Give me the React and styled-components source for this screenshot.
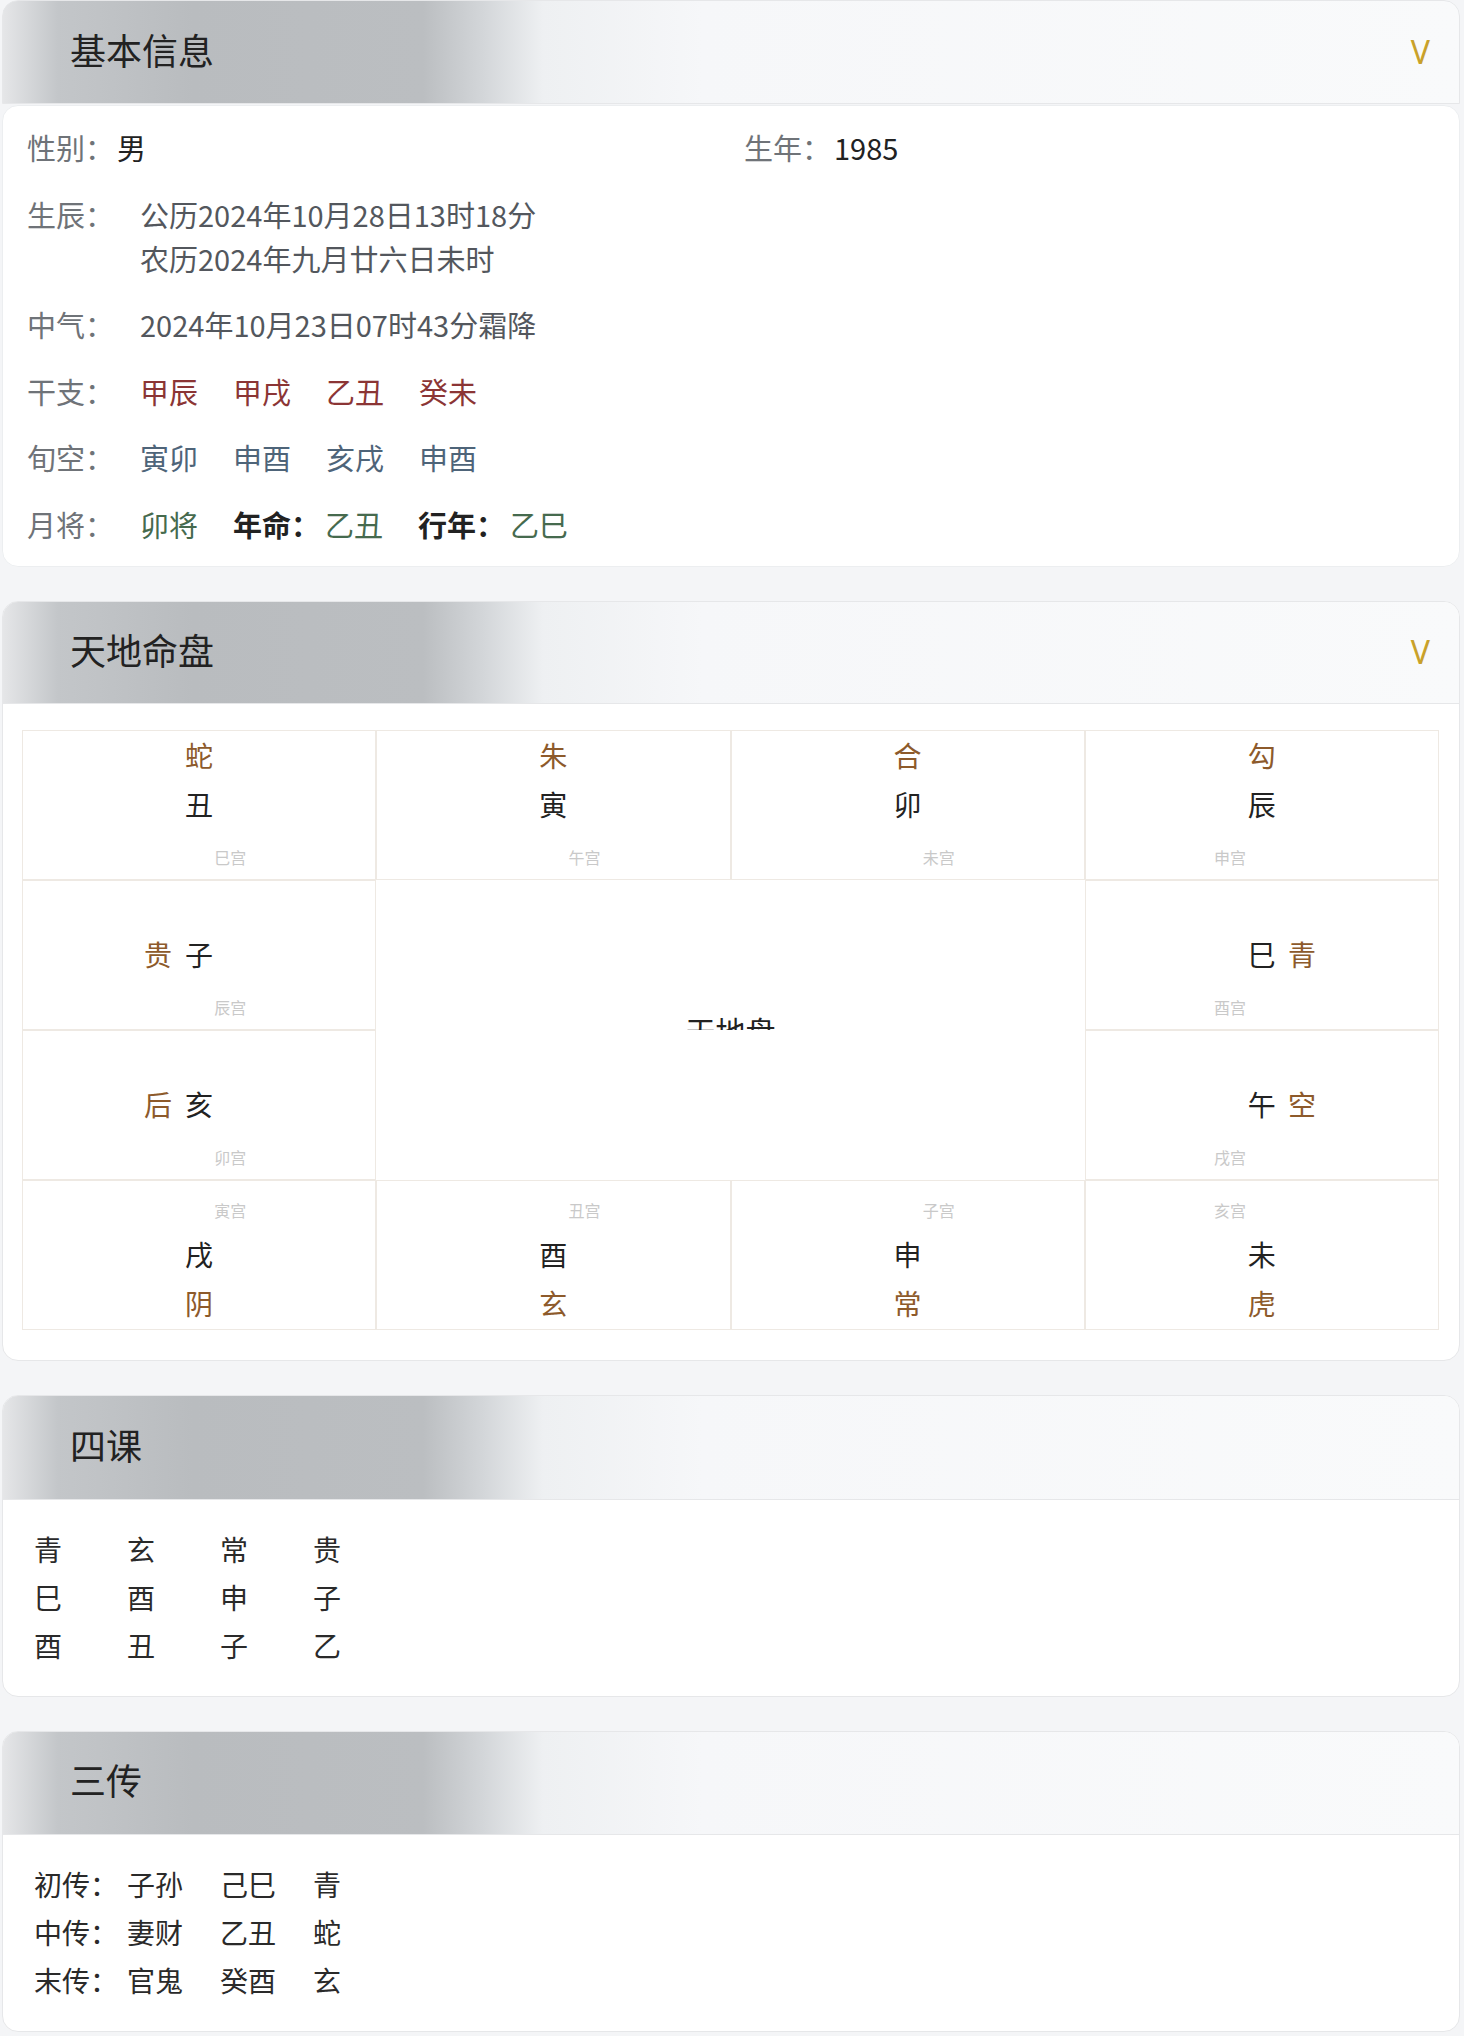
import React from 'react';
import styled, { createGlobalStyle } from 'styled-components';

const GlobalStyle = createGlobalStyle`
    html, body {
        margin: 0;
        padding: 0;
        background: #f4f5f7;
    }
    body {
        font-family: "Noto Sans CJK SC", "Noto Sans", sans-serif;
        color: #222;
    }
`;

const Page = styled.div`
    display: flex;
    flex-direction: column;
    gap: 34px;
    padding: 0 4px 0 2px;
`;

const Card = styled.section`
    background: ${p => (p.$split ? 'transparent' : '#fff')};
    border: ${p => (p.$split ? 'none' : '1.5px solid #e6e7e9')};
    border-radius: 16px;
    overflow: hidden;
`;

const Header = styled.header`
    box-sizing: border-box;
    height: ${p => p.$h}px;
    display: flex;
    align-items: center;
    justify-content: space-between;
    padding: 0 29px 7px 67px;
    background: linear-gradient(90deg, #e5e6e8 0px, #c3c6c9 55px, #b9bcbf 190px, #bbbec1 420px,
        #d3d6d9 480px, #eef0f2 540px, #f6f7f9 700px, #f9fafb 100%);
    border-bottom: 1.5px solid #e6e7e9;
    ${p => p.$split && `
        border: 1.5px solid #e6e7e9;
        border-radius: 16px 16px 0 0;
    `}
`;

const Title = styled.h2`
    margin: 0;
    font-size: 36px;
    font-weight: 400;
    line-height: 1;
    color: #222;
`;

const Chevron = styled.span`
    font-family: "Noto Sans", "Liberation Sans", sans-serif;
    font-size: 32px;
    line-height: 1;
    color: #c9a12a;
    margin-top: 6px;
`;

const InfoBody = styled.div`
    margin-top: 1px;
    background: #fff;
    border: 1.5px solid #eceef0;
    border-radius: 16px;
    padding: 19px 24px 20px;
    display: flex;
    flex-direction: column;
    gap: 22.6px;
`;

const PairRow = styled.div`
    display: grid;
    grid-template-columns: 717px 1fr;
    font-size: 29px;
    line-height: 44px;
`;

const InfoRow = styled.div`
    display: flex;
    font-size: 29px;
    line-height: 44px;
`;

const Label = styled.span`
    flex-shrink: 0;
    width: ${p => p.$w || 'auto'};
    margin-right: ${p => p.$gap || 0};
    color: #6f7378;
`;

const Value = styled.span`
    color: ${p => p.$color || '#222'};
    font-weight: ${p => (p.$bold ? 700 : 400)};
`;

const Lines = styled.div`
    display: flex;
    flex-direction: column;
    color: #53575d;
`;

const Items = styled.div`
    display: flex;
    gap: 35px;
`;

const Tag = styled.span`
    display: flex;
    gap: 5px;
`;

const BoardBody = styled.div`
    padding: 26px 20px 30px 19px;
`;

const Board = styled.div`
    display: grid;
    grid-template-columns: repeat(4, 1fr);
    grid-template-rows: repeat(4, 150px);
`;

const Cell = styled.div`
    position: relative;
    grid-column: ${p => p.$c};
    grid-row: ${p => p.$r};
    border: 1.5px solid #eee9e3;
    background: #fff;
    display: flex;
    flex-direction: column;
    align-items: center;
    justify-content: ${p => (p.$side ? 'center' : 'flex-start')};
    padding-top: ${p => (p.$pos === 'bottom' ? '49px' : '0')};
    font-size: 28px;
    line-height: 49px;
`;

const General = styled.span`
    color: #8d5a2b;
`;

const Branch = styled.span`
    position: relative;
    color: #222;
`;

const SideGeneral = styled.span`
    position: absolute;
    top: 0;
    color: #8d5a2b;
    ${p => (p.$right ? 'left: calc(100% + 12px);' : 'right: calc(100% + 13px);')}
`;

const Palace = styled.span`
    position: absolute;
    font-size: 16px;
    line-height: 16px;
    color: #c9c9c9;
    left: ${p => (p.$shift ? 'calc(50% - 48px)' : 'calc(50% + 15px)')};
    ${p => (p.$top ? 'top: 21px;' : 'bottom: 14px;')}
`;

const Center = styled.div`
    grid-column: 2 / 4;
    grid-row: 2;
    overflow: hidden;
    display: flex;
    align-items: flex-end;
    justify-content: center;
`;

const CenterText = styled.span`
    font-size: 30px;
    line-height: 30px;
    color: #222;
    transform: translateY(50%);
`;

const ListBody = styled.div`
    padding: 25px 31px 27px;
`;

const Table = styled.div`
    display: grid;
    grid-template-columns: repeat(4, 93px);
    font-size: 28px;
    line-height: 48px;
    color: #2a2a2a;
`;

const board = [
    { r: 1, c: 1, pos: 'top', g: '蛇', b: '丑', p: '巳宫' },
    { r: 1, c: 2, pos: 'top', g: '朱', b: '寅', p: '午宫' },
    { r: 1, c: 3, pos: 'top', g: '合', b: '卯', p: '未宫' },
    { r: 1, c: 4, pos: 'top', g: '勾', b: '辰', p: '申宫' },
    { r: 2, c: 1, pos: 'left', g: '贵', b: '子', p: '辰宫' },
    { r: 2, c: 4, pos: 'right', g: '青', b: '巳', p: '酉宫' },
    { r: 3, c: 1, pos: 'left', g: '后', b: '亥', p: '卯宫' },
    { r: 3, c: 4, pos: 'right', g: '空', b: '午', p: '戌宫' },
    { r: 4, c: 1, pos: 'bottom', g: '阴', b: '戌', p: '寅宫' },
    { r: 4, c: 2, pos: 'bottom', g: '玄', b: '酉', p: '丑宫' },
    { r: 4, c: 3, pos: 'bottom', g: '常', b: '申', p: '子宫' },
    { r: 4, c: 4, pos: 'bottom', g: '虎', b: '未', p: '亥宫' },
];

const siKe = [
    ['青', '玄', '常', '贵'],
    ['巳', '酉', '申', '子'],
    ['酉', '丑', '子', '乙'],
];

const sanChuan = [
    ['初传：', '子孙', '己巳', '青'],
    ['中传：', '妻财', '乙丑', '蛇'],
    ['末传：', '官鬼', '癸酉', '玄'],
];

const RED = '#8b3535';
const SLATE = '#4e6479';
const GREEN = '#466a4e';

const BoardCell = ({ cell }) => {
    const side = cell.pos === 'left' || cell.pos === 'right';
    return (
        <Cell $r={cell.r} $c={cell.c} $pos={cell.pos} $side={side}>
            {cell.pos === 'top' && <General>{cell.g}</General>}
            <Branch>
                {cell.b}
                {side && <SideGeneral $right={cell.pos === 'right'}>{cell.g}</SideGeneral>}
            </Branch>
            {cell.pos === 'bottom' && <General>{cell.g}</General>}
            <Palace $shift={cell.c === 4} $top={cell.pos === 'bottom'}>{cell.p}</Palace>
        </Cell>
    );
};

const App = () => {
    return (
        <Page>
            <GlobalStyle />

            <Card $split>
                <Header $h={104} $split>
                    <Title>基本信息</Title>
                    <Chevron>V</Chevron>
                </Header>
                <InfoBody>
                    <PairRow>
                        <InfoRow>
                            <Label $gap="3px">性别：</Label>
                            <Value>男</Value>
                        </InfoRow>
                        <InfoRow>
                            <Label $gap="3px">生年：</Label>
                            <Value>1985</Value>
                        </InfoRow>
                    </PairRow>
                    <InfoRow>
                        <Label $w="113px">生辰：</Label>
                        <Lines>
                            <span>公历2024年10月28日13时18分</span>
                            <span>农历2024年九月廿六日未时</span>
                        </Lines>
                    </InfoRow>
                    <InfoRow>
                        <Label $w="113px">中气：</Label>
                        <Lines>
                            <span>2024年10月23日07时43分霜降</span>
                        </Lines>
                    </InfoRow>
                    <InfoRow>
                        <Label $w="113px">干支：</Label>
                        <Items>
                            {['甲辰', '甲戌', '乙丑', '癸未'].map(v => (
                                <Value key={v} $color={RED}>{v}</Value>
                            ))}
                        </Items>
                    </InfoRow>
                    <InfoRow>
                        <Label $w="113px">旬空：</Label>
                        <Items>
                            {['寅卯', '申酉', '亥戌', '申酉'].map((v, i) => (
                                <Value key={i} $color={SLATE}>{v}</Value>
                            ))}
                        </Items>
                    </InfoRow>
                    <InfoRow>
                        <Label $w="113px">月将：</Label>
                        <Items>
                            <Value $color={GREEN}>卯将</Value>
                            <Tag>
                                <Value $bold>年命：</Value>
                                <Value $color={GREEN}>乙丑</Value>
                            </Tag>
                            <Tag>
                                <Value $bold>行年：</Value>
                                <Value $color={GREEN}>乙巳</Value>
                            </Tag>
                        </Items>
                    </InfoRow>
                </InfoBody>
            </Card>

            <Card>
                <Header $h={102}>
                    <Title>天地命盘</Title>
                    <Chevron>V</Chevron>
                </Header>
                <BoardBody>
                    <Board>
                        {board.map(cell => (
                            <BoardCell key={cell.p} cell={cell} />
                        ))}
                        <Center>
                            <CenterText>天地盘</CenterText>
                        </Center>
                    </Board>
                </BoardBody>
            </Card>

            <Card>
                <Header $h={104}>
                    <Title>四课</Title>
                </Header>
                <ListBody>
                    <Table>
                        {siKe.flat().map((v, i) => (
                            <span key={i}>{v}</span>
                        ))}
                    </Table>
                </ListBody>
            </Card>

            <Card>
                <Header $h={103}>
                    <Title>三传</Title>
                </Header>
                <ListBody>
                    <Table>
                        {sanChuan.flat().map((v, i) => (
                            <span key={i}>{v}</span>
                        ))}
                    </Table>
                </ListBody>
            </Card>
        </Page>
    );
};

export default App;
